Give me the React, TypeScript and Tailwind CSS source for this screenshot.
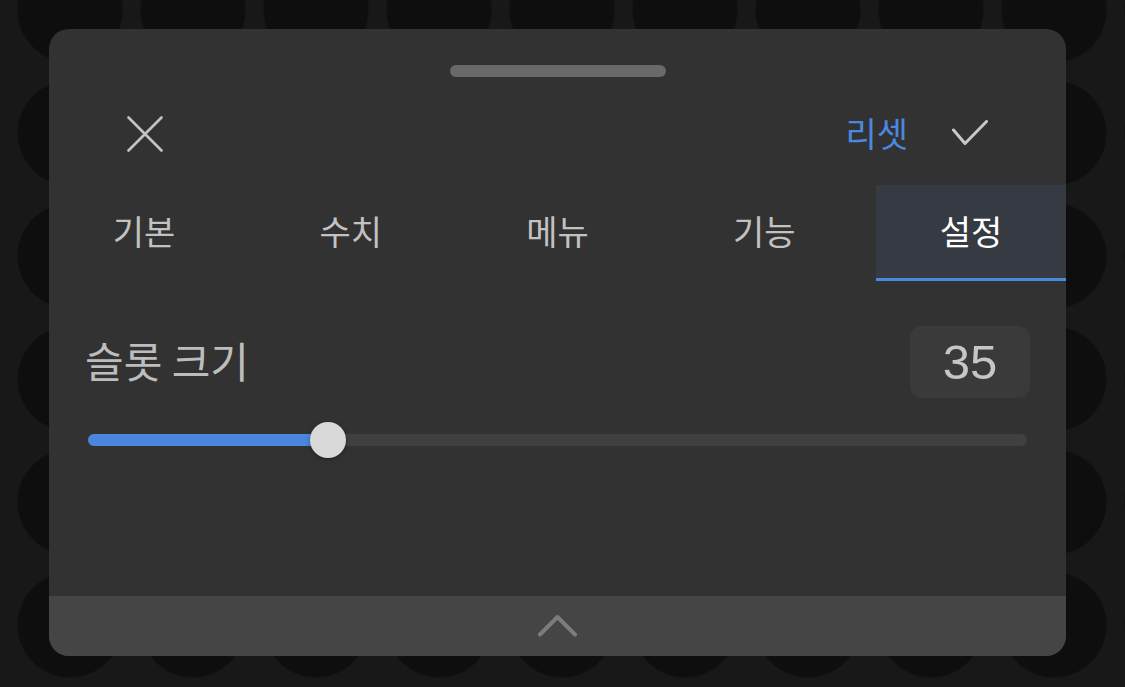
import { useState } from 'react';

const TABS = ['기본', '수치', '메뉴', '기능', '설정'];

const MIN = 10;
const MAX = 108;

export default function App() {
  const [active, setActive] = useState(4);
  const [value, setValue] = useState(35);

  const pct = ((value - MIN) / (MAX - MIN)) * 100;

  return (
    <div className="w-[1125px] h-[687px] overflow-hidden bg-[#181818] bg-[radial-gradient(circle_at_center,#0e0e0e_52px,transparent_53px)] bg-[length:123px_123px] bg-[position:8.5px_-51.5px] pt-[29px] pl-[49px] font-['Noto_Sans_CJK_KR','Noto_Sans',sans-serif]">
      <div className="w-[1017px] h-[627px] rounded-[20px] bg-[#323232] overflow-hidden flex flex-col">
        {/* grab handle */}
        <div className="mt-[36px] mx-auto w-[216px] h-3 rounded-full bg-[#696969]" />

        {/* header */}
        <div className="h-[108px] pt-[4px] px-[78px] flex items-center justify-between">
          <button className="w-9 h-9 mt-[2px]">
            <svg width="36" height="36" viewBox="0 0 36 36" fill="none">
              <path d="M1.5 1.5L34.5 34.5M34.5 1.5L1.5 34.5" stroke="#c4c4c4" strokeWidth="2.6" strokeLinecap="round" />
            </svg>
          </button>
          <div className="flex items-center gap-[44px]">
            <span className="text-[34px] leading-none text-[#4a89e0]">리셋</span>
            <svg width="36" height="26" viewBox="0 0 36 26" fill="none">
              <path d="M1.5 10L13 23.5L34.5 1.5" stroke="#c8c8c8" strokeWidth="3" strokeLinecap="round" strokeLinejoin="round" />
            </svg>
          </div>
        </div>

        {/* tabs */}
        <div className="h-[96px] flex justify-between">
          {TABS.map((t, i) => (
            <button
              key={t}
              onClick={() => setActive(i)}
              className={
                i === active
                  ? 'w-[190px] h-full pb-[2px] flex items-center justify-center text-[34px] text-white bg-[#353a43] border-b-[3px] border-[#4a89e0]'
                  : 'w-[190px] h-full pb-[6px] flex items-center justify-center text-[34px] text-[#c2c2c2]'
              }
            >
              {t}
            </button>
          ))}
        </div>

        {/* slot size */}
        <div className="mt-[45px] pl-[36px] pr-[36px] flex items-center justify-between">
          <span className="text-[42px] text-[#bdbdbd] leading-none pb-[4px]">슬롯 크기</span>
          <div className="w-[120px] h-[72px] rounded-[12px] bg-[#3a3a3a] flex items-center justify-center text-[49px] leading-none text-[#c6c6c6] font-['Liberation_Sans',sans-serif]">
            {value}
          </div>
        </div>

        <div className="mt-[24px] px-[39px]">
          <div className="relative h-[36px] flex items-center">
            <div className="w-full h-3 rounded-full bg-[#404040]">
              <div className="h-full rounded-full bg-[#4a86de]" style={{ width: `${pct}%` }} />
            </div>
            <input
              type="range"
              min={MIN}
              max={MAX}
              value={value}
              onChange={(e) => setValue(Number(e.target.value))}
              className="absolute inset-0 opacity-0"
            />
            <div
              className="absolute top-0 w-9 h-9 -ml-[18px] rounded-full bg-[#d9d9d9] shadow-[0_1px_4px_rgba(0,0,0,0.35)] pointer-events-none"
              style={{ left: `${pct}%` }}
            />
          </div>
        </div>

        <div className="flex-1" />

        {/* bottom bar */}
        <div className="h-[60px] bg-[#454545] flex items-center justify-center">
          <svg width="39" height="22" viewBox="0 0 39 22" fill="none">
            <path d="M2 19.5L19.5 2L37 19.5" stroke="#7c7c7c" strokeWidth="4" strokeLinecap="round" strokeLinejoin="round" />
          </svg>
        </div>
      </div>
    </div>
  );
}
